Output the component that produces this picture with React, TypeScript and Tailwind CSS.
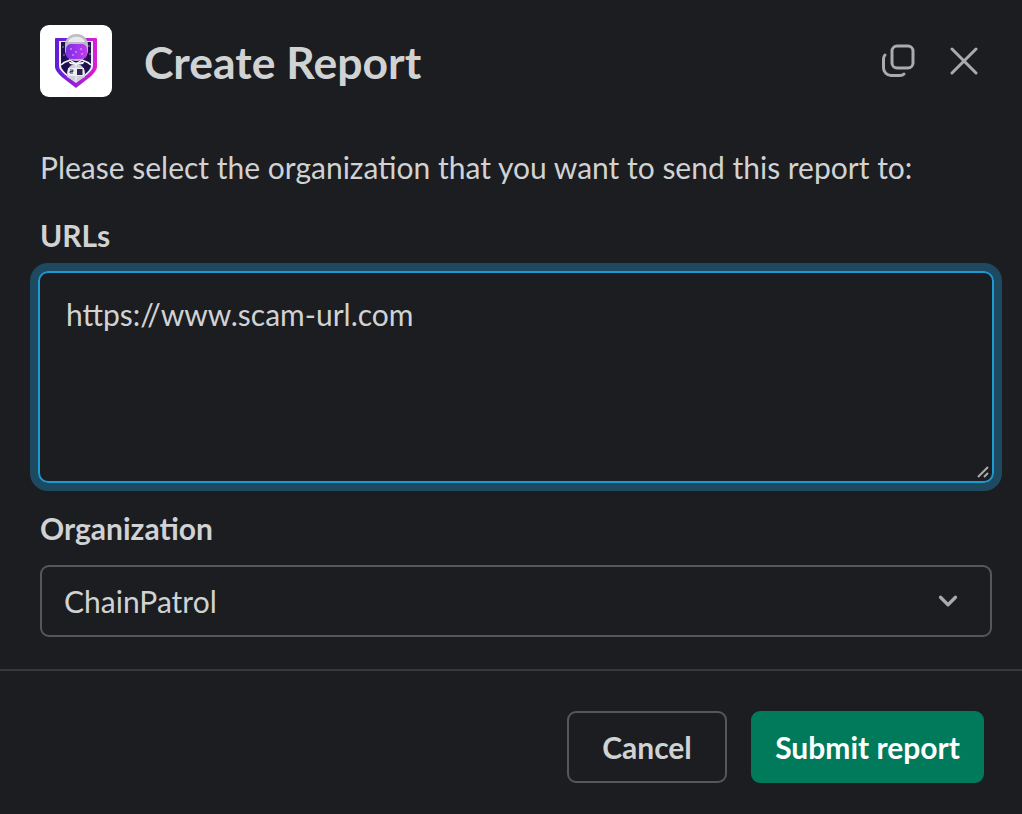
import { ChevronDown } from "lucide-react";

function Logo() {
  return (
    <div className="flex h-[72px] w-[72px] shrink-0 items-center justify-center rounded-[9px] bg-white">
      <svg width="44" height="56" viewBox="0 0 44 56">
        <defs>
          <linearGradient id="shield" x1="0" y1="0" x2="1" y2="0">
            <stop offset="0" stopColor="#5a1fd8" />
            <stop offset="1" stopColor="#dc1fd6" />
          </linearGradient>
          <linearGradient id="visor" x1="0" y1="0" x2="1" y2="0">
            <stop offset="0" stopColor="#7a2ee8" />
            <stop offset="1" stopColor="#c23cee" />
          </linearGradient>
        </defs>
        <path d="M1 6q0-1 1-1h40q1 0 1 1v28c0 6-12 14-21 21C13 48 1 40 1 34z" fill="url(#shield)" />
        <path d="M5 8h34v25c0 5-9 11-17 17C14 44 5 38 5 33z" fill="#f1eef8" />
        <path d="M7 9h30v24c0 4-8 10-15 15C15 43 7 37 7 33z" fill="#1d1150" />
        <g fill="#c9a6f5">
          <circle cx="9" cy="14" r="0.7" />
          <circle cx="10" cy="22" r="0.7" />
          <circle cx="35" cy="13" r="0.7" />
          <circle cx="36" cy="21" r="0.7" />
        </g>
        <path d="M13 40c0-5 4-9 9-9s9 4 9 9v4l-9 5-9-5z" fill="#cfcfd8" />
        <path d="M7 32c3-3 6-4 9-5l6 4 6-4c3 1 6 2 9 5" stroke="#f5f5f8" strokeWidth="1.500" fill="none" />
        <path d="M22 31v17" stroke="#f5f5f8" strokeWidth="1" />
        <rect x="14" y="35" width="16" height="8" fill="#ecedf2" />
        <path d="M16 37h3v1.500h-3v1.500h3" stroke="#2a2350" strokeWidth="0.900" fill="none" />
        <rect x="23" y="36" width="5.500" height="6" fill="#2a2350" />
        <rect x="11" y="1" width="23" height="27" rx="11" fill="#bdbdc6" />
        <path d="M14 9c2-7 15-7 17 0z" fill="#e8e8ee" />
        <rect x="12" y="11" width="21" height="15" rx="5" fill="url(#visor)" />
        <g fill="#f0c8ff">
          <circle cx="17" cy="16" r="0.8" />
          <circle cx="22" cy="19" r="0.8" />
          <circle cx="27" cy="16" r="0.8" />
          <circle cx="19" cy="22" r="0.8" />
          <circle cx="28" cy="21" r="0.8" />
        </g>
        <path d="M14 28c3 2 13 2 17 0l-2 3c-3 1-10 1-13 0z" fill="#f3f3f6" />
      </svg>
    </div>
  );
}

export default function App() {
  return (
    <div className="h-[814px] w-[1022px] overflow-hidden bg-[#1b1d21] font-['Lato',sans-serif] text-[#d1d2d3]">
      <div className="flex h-[147px] items-start pl-[40px] pr-[44px] pt-[25px]">
        <Logo />
        <h1 className="ml-[32px] mt-[15px] text-[44.5px] font-bold leading-[44px]">Create Report</h1>
        <div className="ml-auto flex h-[72px] items-center gap-[34px] text-[#ababad]">
          <svg width="34" height="34" viewBox="0 0 34 34" fill="none" stroke="currentColor" strokeWidth="3" strokeLinecap="round">
            <rect x="10" y="2" width="21" height="22" rx="5" />
            <path d="M3 11c-1 1-1.500 2.500-1.500 4v9c0 4 3.500 7.500 7.500 7.500h9c1.500 0 3-.5 4-1.500" />
          </svg>
          <svg width="28" height="28" viewBox="0 0 28 28" fill="none" stroke="currentColor" strokeWidth="3" strokeLinecap="round">
            <path d="M2 2l24 24M26 2L2 26" />
          </svg>
        </div>
      </div>

      <div className="px-[40px]">
        <p className="text-[30px] leading-[40px]">Please select the organization that you want to send this report to:</p>

        <label className="mt-[30px] block text-[30px] font-bold leading-[36px]">URLs</label>
        <div className="relative mt-[18px] h-[212px] w-[956px] -translate-x-[2px] rounded-[10px] border-2 border-[#1d9bd1] px-[26px] py-[23px] shadow-[0_0_0_8px_#1d4a60]">
          <span className="block text-[30px] leading-[36px]">https://www.scam-url.com</span>
          <svg className="absolute bottom-[2px] right-[2px] text-[#ababad]" width="14" height="14" viewBox="0 0 14 14" fill="none" stroke="currentColor" strokeWidth="2">
            <path d="M2 12L12 2M8 12l4-4" />
          </svg>
        </div>

        <label className="mt-[27px] block text-[30px] font-bold leading-[36px]">Organization</label>
        <div className="mt-[19px] flex h-[72px] w-[952px] items-center justify-between rounded-[9px] border-2 border-[#565759] pl-[22px] pr-[27px]">
          <span className="text-[30px]">ChainPatrol</span>
          <ChevronDown size={30} strokeWidth={2.6} className="text-[#ababad]" />
        </div>
      </div>

      <div className="mt-[32px] border-t-2 border-[#37383b]" />

      <div className="flex justify-end gap-[24px] pr-[38px] pt-[40px]">
        <button className="h-[72px] w-[160px] rounded-[9px] border-2 border-[#565759] text-[30px] font-bold text-[#d1d2d3]">Cancel</button>
        <button className="h-[72px] w-[233px] rounded-[9px] bg-[#007a5a] text-[30px] font-bold text-white">Submit report</button>
      </div>
    </div>
  );
}
